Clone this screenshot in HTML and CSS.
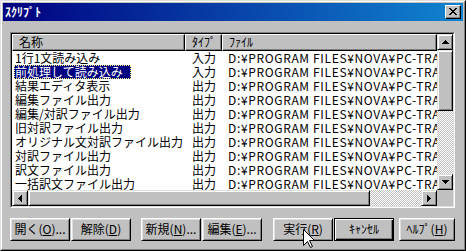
FILE: index.html
```html
<!DOCTYPE html>
<html lang="ja">
<head>
<meta charset="utf-8">
<title>ｽｸﾘﾌﾟﾄ</title>
<link rel="stylesheet" href="styles.css">
</head>
<body>
<div class="window">
  <div class="frame">
    <div class="titlebar">
      <span class="title">ｽｸﾘﾌﾟﾄ</span>
      <div class="close">
        <svg width="8" height="7" viewBox="0 0 8 7" shape-rendering="crispEdges"><path d="M0 0h2v1h-2zM6 0h2v1h-2zM1 1h2v1h-2zM5 1h2v1h-2zM2 2h4v1h-4zM3 3h2v1h-2zM2 4h4v1h-4zM1 5h2v1h-2zM5 5h2v1h-2zM0 6h2v1h-2zM6 6h2v1h-2z" fill="#000"/></svg>
      </div>
    </div>
    <div class="body">
      <div class="listbox">
        <div class="listbox-inner">
          <div class="list-view">
            <div class="header cols">
              <div class="hcell">名称</div>
              <div class="hcell">ﾀｲﾌﾟ</div>
              <div class="hcell">ﾌｧｲﾙ</div>
            </div>
            <div class="row cols"><div class="name"><span class="txt">1行1文読み込み</span></div><div class="type">入力</div><div class="file">D:¥PROGRAM FILES¥NOVA¥PC-TRANS¥SCRIPT</div></div>
            <div class="row cols"><div class="name"><span class="txt sel">前処理して読み込み</span></div><div class="type">入力</div><div class="file">D:¥PROGRAM FILES¥NOVA¥PC-TRANS¥SCRIPT</div></div>
            <div class="row cols"><div class="name"><span class="txt">結果エディタ表示</span></div><div class="type">出力</div><div class="file">D:¥PROGRAM FILES¥NOVA¥PC-TRANS¥SCRIPT</div></div>
            <div class="row cols"><div class="name"><span class="txt">編集ファイル出力</span></div><div class="type">出力</div><div class="file">D:¥PROGRAM FILES¥NOVA¥PC-TRANS¥SCRIPT</div></div>
            <div class="row cols"><div class="name"><span class="txt">編集/対訳ファイル出力</span></div><div class="type">出力</div><div class="file">D:¥PROGRAM FILES¥NOVA¥PC-TRANS¥SCRIPT</div></div>
            <div class="row cols"><div class="name"><span class="txt">旧対訳ファイル出力</span></div><div class="type">出力</div><div class="file">D:¥PROGRAM FILES¥NOVA¥PC-TRANS¥SCRIPT</div></div>
            <div class="row cols"><div class="name"><span class="txt">オリジナル文対訳ファイル出力</span></div><div class="type">出力</div><div class="file">D:¥PROGRAM FILES¥NOVA¥PC-TRANS¥SCRIPT</div></div>
            <div class="row cols"><div class="name"><span class="txt">対訳ファイル出力</span></div><div class="type">出力</div><div class="file">D:¥PROGRAM FILES¥NOVA¥PC-TRANS¥SCRIPT</div></div>
            <div class="row cols"><div class="name"><span class="txt">訳文ファイル出力</span></div><div class="type">出力</div><div class="file">D:¥PROGRAM FILES¥NOVA¥PC-TRANS¥SCRIPT</div></div>
            <div class="row cols"><div class="name"><span class="txt">一括訳文ファイル出力</span></div><div class="type">出力</div><div class="file">D:¥PROGRAM FILES¥NOVA¥PC-TRANS¥SCRIPT</div></div>
          </div>
          <div class="vscroll">
            <div class="sbtn"><svg width="7" height="4" viewBox="0 0 7 4" shape-rendering="crispEdges"><path d="M3 0h1v1h1v1h1v1h1v1h-7v-1h1v-1h1v-1h1z" fill="#000"/></svg></div>
            <div class="thumb vthumb"></div>
            <div class="track"></div>
            <div class="sbtn"><svg width="7" height="4" viewBox="0 0 7 4" shape-rendering="crispEdges"><path d="M0 0h7v1h-1v1h-1v1h-1v1h-1v-1h-1v-1h-1v-1h-1z" fill="#000"/></svg></div>
          </div>
          <div class="hscroll">
            <div class="sbtn"><svg width="4" height="7" viewBox="0 0 4 7" shape-rendering="crispEdges"><path d="M3 0h1v7h-1v-1h-1v-1h-1v-1h-1v-1h1v-1h1v-1h1z" fill="#000"/></svg></div>
            <div class="thumb hthumb"></div>
            <div class="track"></div>
            <div class="sbtn"><svg width="4" height="7" viewBox="0 0 4 7" shape-rendering="crispEdges"><path d="M0 0h1v1h1v1h1v1h1v1h-1v1h-1v1h-1v1h-1z" fill="#000"/></svg></div>
          </div>
          <div class="corner"></div>
        </div>
      </div>
      <div class="buttons">
        <div class="btn b-open">開く(<u>O</u>)...</div>
        <div class="btn b-clear">解除(<u>D</u>)</div>
        <div class="btn b-new">新規(<u>N</u>)...</div>
        <div class="btn b-edit">編集(<u>E</u>)...</div>
        <div class="btn b-run">実行(<u>R</u>)</div>
        <div class="btn b-cancel default">ｷｬﾝｾﾙ</div>
        <div class="btn b-help">ﾍﾙﾌﾟ(<u>H</u>)</div>
      </div>
    </div>
  </div>
  <svg class="cursor" width="12" height="19" viewBox="0 0 12 19"><path d="M0.5 0.5V16.5L4.5 12.5L7.5 18.5L9.5 17.5L6.5 11.5H11.5Z" fill="#fff" stroke="#000" stroke-width="1"/></svg>
</div>
</body>
</html>
```
FILE: styles.css
```css
html, body {
  margin: 0;
  padding: 0;
  background: #c0c0c0;
}
body {
  font-family: "Noto Sans CJK JP", "Noto Sans", sans-serif;
  font-size: 12px;
  color: #000;
}
.window {
  position: relative;
  width: 466px;
  height: 251px;
  box-sizing: border-box;
  background: #c0c0c0;
  border: 1px solid;
  border-color: #dfdfdf #000 #000 #dfdfdf;
}
.frame {
  height: 100%;
  box-sizing: border-box;
  border: 1px solid;
  border-color: #fff #808080 #808080 #fff;
  padding: 1px;
  display: flex;
  flex-direction: column;
}
.titlebar {
  height: 18px;
  flex: none;
  background: linear-gradient(90deg, #000080, #1084d0);
  display: flex;
  align-items: center;
  padding: 0 2px;
}
.title {
  flex: 1;
  color: #fff;
  font-weight: bold;
  font-size: 12px;
  line-height: 18px;
}
.close {
  width: 16px;
  height: 14px;
  box-sizing: border-box;
  background: #c0c0c0;
  border: 1px solid;
  border-color: #fff #000 #000 #fff;
  box-shadow: inset -1px -1px #808080;
  display: flex;
  align-items: center;
  justify-content: center;
}
.close svg { display: block; margin: 0 0 1px 0; }
.body {
  flex: 1;
  padding: 11px 8px 0 7px;
}
.listbox {
  height: 176px;
  box-sizing: border-box;
  border: 1px solid;
  border-color: #808080 #fff #fff #808080;
}
.listbox-inner {
  height: 100%;
  box-sizing: border-box;
  border: 1px solid;
  border-color: #000 #dfdfdf #dfdfdf #000;
  background: #fff;
  display: grid;
  grid-template-columns: 1fr 16px;
  grid-template-rows: 1fr 16px;
}
.list-view {
  min-width: 0;
  min-height: 0;
  overflow: hidden;
}
.cols {
  display: grid;
  grid-template-columns: 173px 37px 1fr;
}
.header { height: 17px; }
.hcell {
  box-sizing: border-box;
  height: 17px;
  background: #c0c0c0;
  border: 1px solid;
  border-color: #fff #000 #000 #fff;
  box-shadow: inset -1px -1px #808080;
  padding-left: 6px;
  line-height: 14px;
  white-space: nowrap;
  overflow: hidden;
}
.row {
  height: 14px;
  line-height: 14px;
  white-space: nowrap;
}
.name { padding-left: 2px; overflow: hidden; }
.txt {
  display: inline-block;
  height: 14px;
  box-sizing: border-box;
  padding: 0 8px 0 1px;
}
.sel {
  background: #000080;
  color: #fff;
  outline: 1px dotted #ffff80;
  outline-offset: -1px;
}
.type { padding-left: 7px; }
.file {
  padding-left: 6px;
  overflow: hidden;
  letter-spacing: 0.65px;
}
.sbtn, .thumb {
  box-sizing: border-box;
  background: #c0c0c0;
  border: 1px solid;
  border-color: #dfdfdf #000 #000 #dfdfdf;
  box-shadow: inset 1px 1px #fff, inset -1px -1px #808080;
}
.sbtn {
  width: 16px;
  height: 16px;
  flex: none;
  display: flex;
  align-items: center;
  justify-content: center;
}
.sbtn svg { display: block; }
.track {
  flex: 1;
  background: repeating-conic-gradient(#c0c0c0 0 25%, #fff 0 50%) 0 0 / 2px 2px;
}
.vscroll {
  display: flex;
  flex-direction: column;
  min-height: 0;
}
.vthumb { height: 61px; flex: none; }
.hscroll {
  display: flex;
  min-width: 0;
}
.hthumb { width: 342px; flex: none; }
.corner { background: #c0c0c0; }
.buttons {
  display: flex;
  margin-top: 10px;
  height: 23px;
}
.btn {
  box-sizing: border-box;
  width: 60px;
  height: 23px;
  background: #c0c0c0;
  border: 1px solid;
  border-color: #fff #000 #000 #fff;
  box-shadow: inset 1px 1px #dfdfdf, inset -1px -1px #808080;
  text-align: center;
  line-height: 20px;
  white-space: nowrap;
}
.btn u { text-underline-offset: 1px; }
.default {
  border-color: #000;
  box-shadow: inset 1px 1px #fff, inset -1px -1px #000, inset -2px -2px #808080;
}
.b-clear { margin-left: 1px; }
.b-new { margin-left: 10px; }
.b-edit { margin-left: 1px; }
.b-run { margin-left: 11px; }
.b-cancel { margin-left: 1px; }
.b-help { margin-left: 5px; width: 56px; }
.cursor {
  position: absolute;
  left: 302px;
  top: 228px;
  display: block;
}
```
